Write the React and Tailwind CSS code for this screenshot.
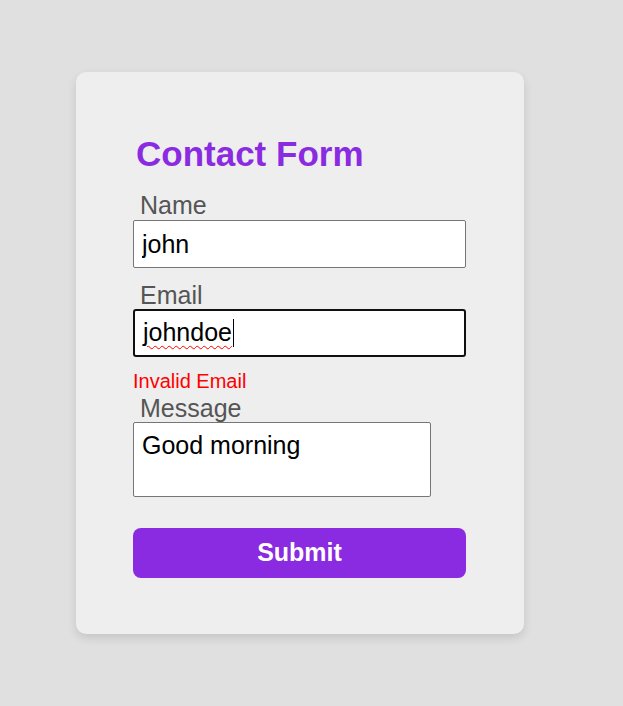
export default function App() {
  return (
    <div className="min-h-screen w-full bg-[#e0e0e0] pt-[72px] pl-[76px]" style={{ fontFamily: '"Liberation Sans", Arial, sans-serif' }}>
      <div className="w-[448px] rounded-[10px] bg-[#eeeeee] px-[57px] pt-[62px] pb-[56px] shadow-[0_4px_10px_rgba(0,0,0,0.12)]">
        <h2 className="ml-[3px] text-[35px] leading-[40px] font-bold text-[#8a2be2]">Contact Form</h2>
        <label className="mt-[17px] ml-[7px] block text-[25px] leading-[28px] text-[#555555]">Name</label>
        <input
          defaultValue="john"
          className="mt-px block h-[48px] w-[333px] rounded-[2px] border border-[#767676] bg-white px-[8px] text-[25px] text-black outline-none"
        />
        <label className="mt-[13px] ml-[7px] block text-[25px] leading-[28px] text-[#555555]">Email</label>
        <div className="flex h-[48px] w-[333px] items-center rounded-[3px] border-2 border-[#101010] bg-white pl-[8px] text-[25px] text-black">
          <span className="underline decoration-wavy decoration-[#ff0000] decoration-1 underline-offset-[4px]">johndoe</span>
          <span className="ml-px inline-block h-[28px] w-px bg-black"></span>
        </div>
        <div className="mt-[13px] text-[20px] leading-[22px] text-[#ff0000]">Invalid Email</div>
        <label className="mt-[2px] ml-[7px] block text-[25px] leading-[28px] text-[#555555]">Message</label>
        <textarea
          defaultValue="Good morning"
          className="block h-[75px] w-[298px] resize-none rounded-[2px] border border-[#767676] bg-white px-[8px] pt-[8px] text-[25px] leading-[28px] text-black outline-none"
        />
        <button className="mt-[31px] block h-[50px] w-[333px] rounded-[8px] bg-[#8a2be2] text-[25px] font-bold text-white">Submit</button>
      </div>
    </div>
  );
}
